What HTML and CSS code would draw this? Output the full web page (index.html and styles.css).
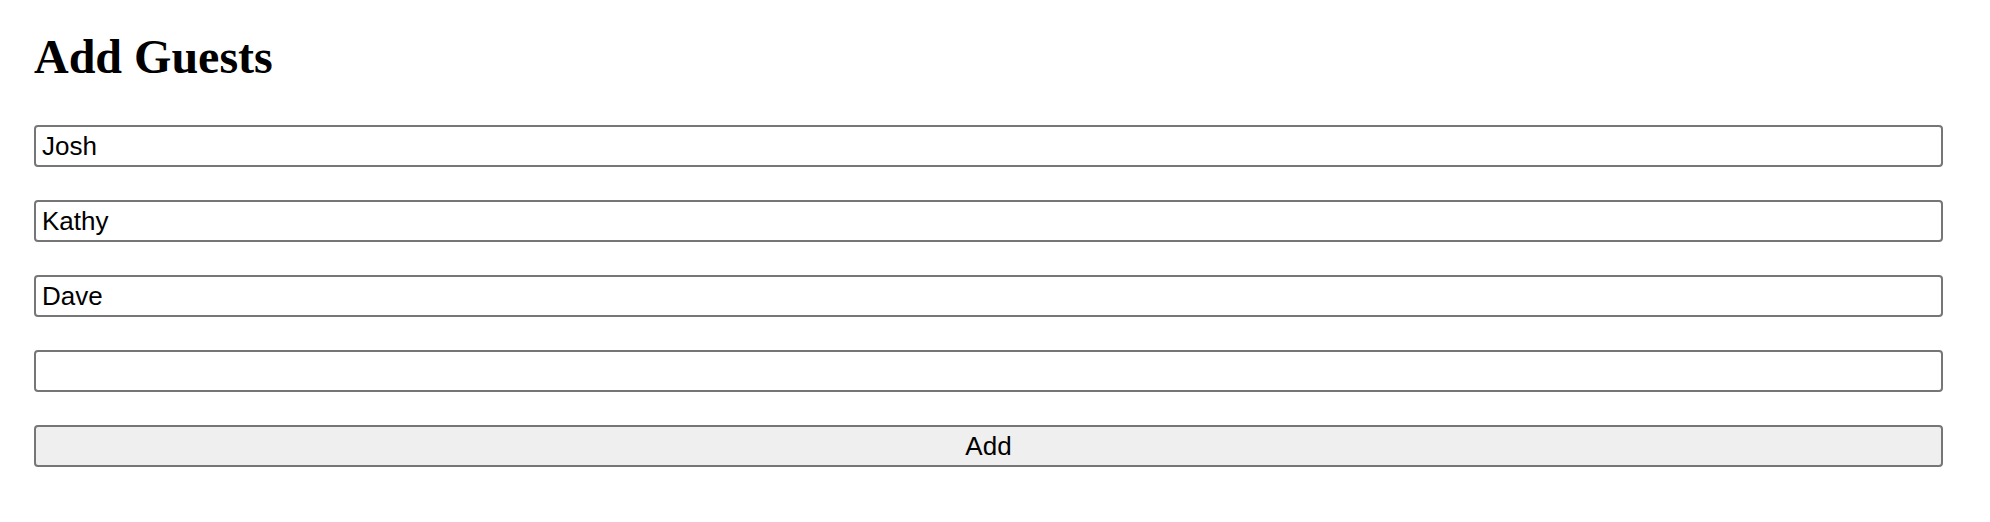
FILE: index.html
```html
<!DOCTYPE html>
<html lang="en">

<head>
    <meta charset="UTF-8">
    <meta name="viewport" content="width=device-width, initial-scale=1.0">
    <title>Add Guests</title>
    <link rel="stylesheet" href="styles.css">
</head>

<body>

    <div class="container">
        <h1>Add Guests</h1>
        <form class="guest-form" onsubmit="return false">
            <input type="text" class="guest-input" value="Josh">
            <input type="text" class="guest-input" value="Kathy">
            <input type="text" class="guest-input" value="Dave">
            <input type="text" class="guest-input" value="">
            <button type="submit" class="add-btn">Add</button>
        </form>
    </div>

</body>

</html>
```

FILE: styles.css
```css
body {
    margin: 0;
    background: #fff;
    font-family: 'Liberation Serif', 'Times New Roman', serif;
}

.container {
    padding: 30px 47px 0 34px;
}

h1 {
    font-size: 48px;
    line-height: 53px;
    font-weight: bold;
    margin: 0 0 42px 0;
    color: #000;
}

.guest-form {
    display: flex;
    flex-direction: column;
    gap: 33px;
}

.guest-input,
.add-btn {
    box-sizing: border-box;
    width: 100%;
    height: 42px;
    margin: 0;
    border: 2px solid #767676;
    border-radius: 4px;
    font-family: 'Liberation Sans', Arial, sans-serif;
    font-size: 26px;
    color: #000;
}

.guest-input {
    padding: 0 6px;
    background: #fff;
}

.add-btn {
    padding: 0;
    background: #efefef;
    text-align: center;
}
```
